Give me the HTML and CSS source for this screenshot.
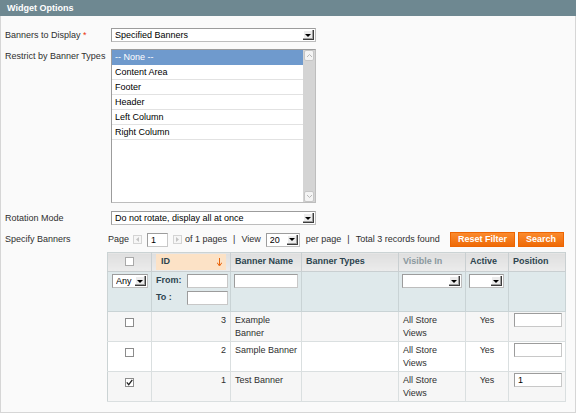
FILE: index.html
```html
<!DOCTYPE html>
<html>
<head>
<meta charset="utf-8">
<title>Widget Options</title>
<link rel="stylesheet" href="styles.css">
</head>
<body>
<div class="head">Widget Options</div>
<div class="fieldset">
  <div class="row r1">
    <div class="label">Banners to Display <span class="req">*</span></div>
    <div class="value">
      <div class="select sel-wide"><span class="sel-text">Specified Banners</span><span class="sel-arrow"></span></div>
    </div>
  </div>
  <div class="row r2">
    <div class="label">Restrict by Banner Types</div>
    <div class="value">
      <div class="listbox">
        <ul class="options">
          <li class="selected">-- None --</li>
          <li>Content Area</li>
          <li>Footer</li>
          <li>Header</li>
          <li>Left Column</li>
          <li>Right Column</li>
        </ul>
        <div class="scrollbar">
          <span class="sb-btn"><svg width="7" height="5" viewBox="0 0 7 5"><path d="M1 4 L3.5 1.5 L6 4" fill="none" stroke="#b8b8b8" stroke-width="1"/></svg></span>
          <span class="sb-btn"><svg width="7" height="5" viewBox="0 0 7 5"><path d="M1 1 L3.5 3.5 L6 1" fill="none" stroke="#b8b8b8" stroke-width="1"/></svg></span>
        </div>
      </div>
    </div>
  </div>
  <div class="row r3">
    <div class="label">Rotation Mode</div>
    <div class="value">
      <div class="select sel-wide"><span class="sel-text">Do not rotate, display all at once</span><span class="sel-arrow"></span></div>
    </div>
  </div>
  <div class="row r4">
    <div class="label">Specify Banners</div>
    <div class="value grid-value">
      <div class="pager">
        <span>Page</span>
        <span class="pg-btn pg-prev"><svg width="5" height="5" viewBox="0 0 5 5"><path d="M4 0 L1 2.5 L4 5 Z" fill="#c4c4c4"/></svg></span>
        <input class="input pg-input" type="text" value="1">
        <span class="pg-btn pg-next"><svg width="5" height="5" viewBox="0 0 5 5"><path d="M1 0 L4 2.5 L1 5 Z" fill="#c4c4c4"/></svg></span>
        <span class="pg-of">of 1 pages</span>
        <span class="sep">|</span>
        <span>View</span>
        <div class="select sel-view"><span class="sel-text">20</span><span class="sel-arrow"></span></div>
        <span class="pg-per">per page</span>
        <span class="sep">|</span>
        <span>Total 3 records found</span>
        <div class="buttons">
          <button class="btn">Reset Filter</button>
          <button class="btn">Search</button>
        </div>
      </div>
      <table class="grid">
        <colgroup>
          <col class="c-cb"><col class="c-id"><col class="c-name"><col class="c-types"><col class="c-vis"><col class="c-act"><col class="c-pos">
        </colgroup>
        <thead>
          <tr class="headings">
            <th class="center"><span class="cb cb-head"></span></th>
            <th class="sorted"><span class="sort-link"><span>ID</span><svg width="5" height="8" viewBox="0 0 5 8"><path d="M2.5 0 V7" stroke="#e8640c" stroke-width="1"/><path d="M0 4.5 L2.5 8 L5 4.5" fill="none" stroke="#e8640c" stroke-width="1"/></svg></span></th>
            <th>Banner Name</th>
            <th>Banner Types</th>
            <th class="nosort">Visible In</th>
            <th>Active</th>
            <th>Position</th>
          </tr>
          <tr class="filter">
            <th><div class="select sel-any"><span class="sel-text">Any</span><span class="sel-arrow"></span></div></th>
            <th>
              <div class="range">
                <span class="range-label">From:</span><input class="input range-input" type="text">
                <span class="range-label">To :</span><input class="input range-input" type="text">
              </div>
            </th>
            <th><input class="input name-input" type="text"></th>
            <th></th>
            <th><div class="select sel-vis"><span class="sel-text"></span><span class="sel-arrow"></span></div></th>
            <th><div class="select sel-act"><span class="sel-text"></span><span class="sel-arrow"></span></div></th>
            <th></th>
          </tr>
        </thead>
        <tbody>
          <tr class="odd">
            <td class="center"><span class="cb"></span></td>
            <td class="num">3</td>
            <td class="name">Example Banner</td>
            <td></td>
            <td>All Store Views</td>
            <td class="center">Yes</td>
            <td class="pos"><input class="input pos-input" type="text"></td>
          </tr>
          <tr>
            <td class="center"><span class="cb"></span></td>
            <td class="num">2</td>
            <td class="name">Sample Banner</td>
            <td></td>
            <td>All Store Views</td>
            <td class="center">Yes</td>
            <td class="pos"><input class="input pos-input" type="text"></td>
          </tr>
          <tr class="odd">
            <td class="center"><span class="cb checked"><svg width="7" height="7" viewBox="0 0 7 7"><path d="M0.8 3.4 L2.7 5.6 L6.3 0.8" fill="none" stroke="#222" stroke-width="1.3"/></svg></span></td>
            <td class="num">1</td>
            <td class="name">Test Banner</td>
            <td></td>
            <td>All Store Views</td>
            <td class="center">Yes</td>
            <td class="pos"><input class="input pos-input" type="text" value="1"></td>
          </tr>
        </tbody>
      </table>
    </div>
  </div>
</div>
</body>
</html>
```

FILE: styles.css
```css
* { box-sizing: border-box; }
html, body { margin: 0; padding: 0; }
body {
  width: 576px;
  height: 414px;
  overflow: hidden;
  background: #ffffff;
  font: 9px/1.5 "Liberation Sans", Arial, sans-serif;
  color: #2f2f2f;
}

.head {
  height: 16px;
  line-height: 16px;
  padding-left: 7px;
  background: #6e8891;
  color: #ffffff;
  font-weight: bold;
}

.fieldset {
  height: 397px;
  border: 1px solid #d6d6d6;
  border-top: 0;
  background: #fafafa;
  padding: 12px 0 0 4px;
}

.row { display: flex; align-items: flex-start; }
.r2 { margin-top: 7px; }
.r3 { margin-top: 8px; }
.r4 { margin-top: 7px; }

.label {
  width: 102px;
  flex: none;
  line-height: 14px;
  color: #2f2f2f;
}
.req { color: #eb340a; }

.value { padding-left: 4px; }
.grid-value { padding-left: 0; }

/* faux selects */
.select {
  display: flex;
  align-items: center;
  height: 14px;
  border: 1px solid #9c9c9c;
  border-right-color: #bdbdbd;
  border-bottom-color: #bdbdbd;
  background: #ffffff;
  padding-left: 3px;
  font-weight: normal;
}
.sel-text {
  flex: 1;
  white-space: nowrap;
  overflow: hidden;
  line-height: 12px;
  color: #000;
}
.sel-arrow {
  flex: none;
  width: 11px;
  height: 10px;
  margin-right: 1px;
  background: #ececec;
  border-right: 1px solid #3c3c3c;
  border-bottom: 1px solid #3c3c3c;
  box-shadow: inset -1px -1px 0 #a0a0a0, inset 1px 1px 0 #ffffff;
  display: flex;
  align-items: center;
  justify-content: center;
}
.sel-arrow::after {
  content: "";
  display: block;
  margin-top: 1px;
  border-left: 3px solid transparent;
  border-right: 3px solid transparent;
  border-top: 3px solid #000;
}
.sel-wide { width: 205px; }
.sel-view { width: 34px; margin-left: 5px; }
.sel-any { width: 36px; }
.sel-vis { width: 60px; }
.sel-act { width: 35px; }

/* listbox */
.listbox {
  display: flex;
  width: 205px;
  height: 154px;
  border: 1px solid #9c9c9c;
  border-right-color: #bdbdbd;
  border-bottom-color: #bdbdbd;
  background: #ffffff;
}
.options {
  flex: 1;
  margin: 0;
  padding: 0;
  list-style: none;
}
.options li {
  height: 15px;
  line-height: 14px;
  padding-left: 3px;
  border-bottom: 1px solid #e2e2e2;
  color: #000;
}
.options li.selected {
  background: #6f9acd;
  color: #ffffff;
  border-bottom-color: #6f9acd;
}
.scrollbar {
  flex: none;
  width: 12px;
  background: #d4d4d4;
  display: flex;
  flex-direction: column;
  justify-content: space-between;
  padding: 0 1px;
}
.sb-btn {
  height: 11px;
  background: #f4f4f4;
  border: 1px solid #c6c6c6;
  border-radius: 2px;
  display: flex;
  align-items: center;
  justify-content: center;
}

/* inputs */
.input {
  display: block;
  height: 14px;
  margin: 0;
  padding: 0 3px;
  border: 1px solid #9c9c9c;
  border-right-color: #c8c8c8;
  border-bottom-color: #c8c8c8;
  background: #ffffff;
  font: 9px "Liberation Sans", Arial, sans-serif;
  color: #000;
  outline: none;
}

/* pager */
.pager {
  display: flex;
  align-items: center;
  height: 15px;
  width: 458px;
  padding-left: 1px;
  white-space: nowrap;
  color: #2f2f2f;
}
.pg-btn {
  width: 9px;
  height: 9px;
  border: 1px solid #d4d4d4;
  background: #f6f6f6;
  display: flex;
  align-items: center;
  justify-content: center;
}
.pg-prev { margin-left: 4px; }
.pg-input { width: 21px; margin-left: 5px; }
.pg-next { margin-left: 5px; }
.pg-of { margin-left: 3px; }
.sep { margin: 0 6px; }
.pg-per { margin-left: 6px; }
.buttons { margin-left: auto; display: flex; gap: 3px; padding-right: 1px; }
.btn {
  height: 15px;
  padding: 0 7px;
  border: 1px solid #ed6502;
  background: linear-gradient(#fb8a2d, #ee6a07);
  color: #ffffff;
  font: bold 9px "Liberation Sans", Arial, sans-serif;
  line-height: 13px;
}

/* grid */
.grid {
  margin-top: 5px;
  width: 458px;
  table-layout: fixed;
  border-collapse: collapse;
  border: 1px solid #cbd3d4;
}
.c-cb { width: 44px; }
.c-id { width: 79px; }
.c-name { width: 71px; }
.c-types { width: 97px; }
.c-vis { width: 67px; }
.c-act { width: 43px; }
.c-pos { width: 57px; }

.headings th {
  height: 18px;
  padding: 0 4px;
  text-align: left;
  font-weight: bold;
  color: #2d444f;
  background: linear-gradient(#dedede, #ececec);
  border-right: 1px solid #c9cfd1;
  border-bottom: 1px solid #c9cfd1;
  white-space: nowrap;
  overflow: hidden;
}
.headings th.nosort { color: #8a989e; }
.headings th.center { text-align: center; }
.headings th.sorted { padding: 1px 4px; }
.sort-link {
  display: flex;
  align-items: center;
  justify-content: space-between;
  height: 16px;
  padding: 0 4px 0 5px;
  background: #fce2c6;
}

.filter th {
  height: 40px;
  padding: 2px 3px;
  vertical-align: top;
  text-align: left;
  font-weight: normal;
  background: #dfe9eb;
  border-right: 1px solid #c9d3d5;
  border-bottom: 1px solid #c9d3d5;
}
.filter th:first-child { padding-left: 4px; }
.range {
  display: grid;
  grid-template-columns: 31px 41px;
  row-gap: 3px;
  align-items: center;
  padding-left: 1px;
}
.range-label { font-weight: bold; color: #2d444f; }
.range-input { width: 41px; }
.name-input { width: 64px; }

.grid td {
  height: 29px;
  padding: 2px 4px 1px;
  line-height: 13px;
  vertical-align: top;
  border-right: 1px solid #dadfe0;
  border-bottom: 1px solid #dadfe0;
  color: #2f2f2f;
  background: #ffffff;
}
.grid tr.odd td { background: #f6f6f6; }
.grid td.num { text-align: right; }
.grid td.center { text-align: center; }
.grid td.name { padding-right: 1px; }
.grid td.pos { padding: 1px 4px 0 5px; }
.pos-input { width: 48px; }

.cb {
  display: inline-flex;
  align-items: center;
  justify-content: center;
  width: 9px;
  height: 9px;
  border: 1px solid #8c8c8c;
  background: #ffffff;
  vertical-align: middle;
}
td .cb { margin-top: 3px; }
.cb-head { border-color: #a9a9a9; }
```
